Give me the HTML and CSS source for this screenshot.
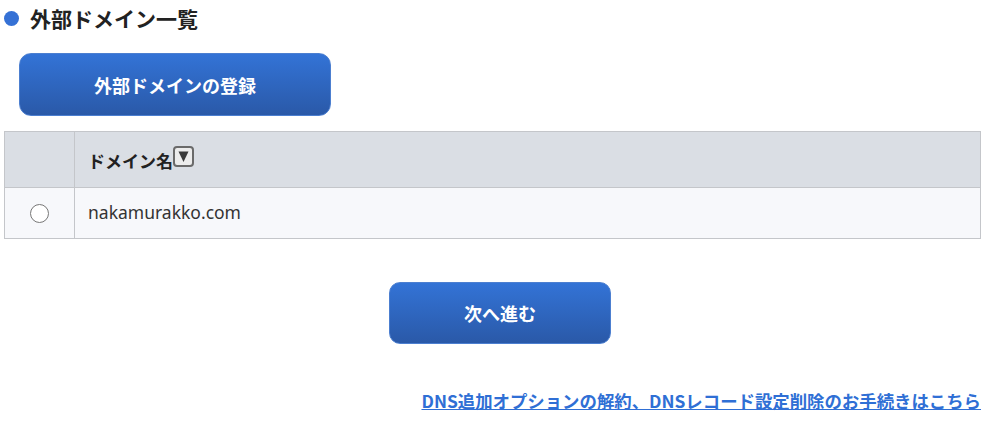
FILE: index.html
```html
<!DOCTYPE html>
<html lang="ja">
<head>
<meta charset="UTF-8">
<title>外部ドメイン一覧</title>
<link rel="stylesheet" href="styles.css">
</head>
<body>

<div class="page">
  <h2 class="section-title"><span class="dot"></span>外部ドメイン一覧</h2>

  <button class="btn btn-register">外部ドメインの登録</button>

  <table class="domain-table">
    <thead>
      <tr>
        <th class="col-select"></th>
        <th class="col-name">ドメイン名<span class="sort-icon"><svg width="13" height="13" viewBox="0 0 13 13"><path d="M1.5 1.5 H11.5 L6.5 12 Z" fill="#3a3a3a"/></svg></span></th>
      </tr>
    </thead>
    <tbody>
      <tr>
        <td class="col-select"><input type="radio" name="domain"></td>
        <td class="col-name">nakamurakko.com</td>
      </tr>
    </tbody>
  </table>

  <div class="actions">
    <button class="btn btn-next">次へ進む</button>
  </div>

  <div class="links">
    <a href="#">DNS追加オプションの解約、DNSレコード設定削除のお手続きはこちら</a>
  </div>
</div>

</body>
</html>
```

FILE: styles.css
```css
/* Reset */
* {
  box-sizing: border-box;
  margin: 0;
  padding: 0;
}

body {
  font-family: "Noto Sans", "Noto Sans CJK JP", sans-serif;
  color: #222;
  background: #fff;
}

.page {
  width: 977px;
  margin-left: 4px;
}

/* Title */
.section-title {
  display: flex;
  align-items: center;
  height: 36px;
  font-size: 21px;
  font-weight: bold;
  color: #222;
}

.section-title .dot {
  width: 15px;
  height: 15px;
  border-radius: 50%;
  background: #3571d5;
  margin-right: 11px;
}

/* Buttons */
.btn {
  display: flex;
  justify-content: center;
  align-items: center;
  border: 1px solid #4c7fd0;
  border-radius: 12px;
  background: linear-gradient(180deg, #3373d6 0%, #2a59a8 100%);
  color: #fff;
  font-family: "Noto Sans CJK JP", sans-serif;
  font-weight: bold;
  font-size: 18px;
  cursor: pointer;
}

.btn-register {
  width: 312px;
  height: 63px;
  margin: 17px 0 0 15px;
}

/* Table */
.domain-table {
  width: 100%;
  margin-top: 15px;
  border-collapse: collapse;
}

.domain-table th,
.domain-table td {
  border: 1px solid #c4c6ca;
  text-align: left;
}

.domain-table th {
  height: 56px;
  background: #dadee4;
  font-family: "Noto Sans CJK JP", sans-serif;
  font-size: 17px;
  font-weight: bold;
  color: #222;
}

.domain-table td {
  height: 51px;
  background: #f7f8fb;
  font-size: 17.5px;
  color: #333;
}

.domain-table .col-select {
  width: 70px;
  text-align: center;
}

.domain-table .col-name {
  padding-left: 13px;
}

.domain-table td.col-name {
  padding-bottom: 2px;
}

.domain-table input[type="radio"] {
  width: 19px;
  height: 19px;
  margin-bottom: 3px;
  vertical-align: middle;
}

.sort-icon {
  display: inline-flex;
  justify-content: center;
  align-items: center;
  width: 21px;
  height: 21px;
  border: 2px solid #6a6a6a;
  border-radius: 4px;
  background: #ececec;
  vertical-align: 5px;
}

/* Next */
.actions {
  margin-top: 43px;
}

.btn-next {
  width: 222px;
  height: 62px;
  margin-left: 385px;
  border-radius: 11px;
}

/* Link */
.links {
  margin-top: 44px;
  text-align: right;
}

.links a {
  font-family: "Noto Sans CJK JP", sans-serif;
  font-size: 17.4px;
  font-weight: bold;
  color: #2f6fd5;
  text-decoration: underline;
}
```
